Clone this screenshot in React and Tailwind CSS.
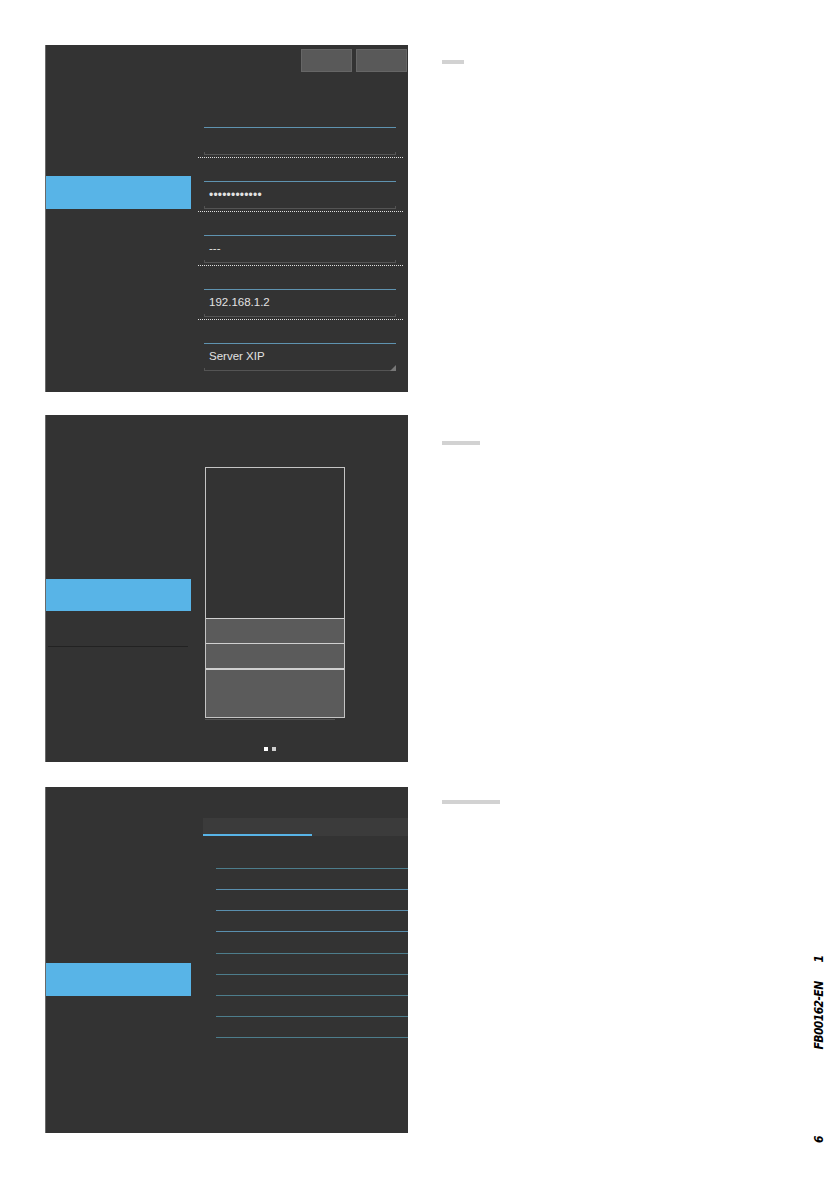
import React from "react";

const font = { fontFamily: '"Liberation Sans", Arial, sans-serif' };

function Field({ text, dotted = true, grip = false, small = false }) {
  return (
    <div className="flex flex-col">
      <div className="ml-[13px] w-[192px] h-px bg-[#5f93b0]" />
      <div className="ml-[18px] h-[24px] pt-[2px] flex items-center text-[11.5px] text-[#e2e2e2]">
        {small ? <span className="text-[12px] tracking-[0.2px]">{text}</span> : text}
      </div>
      <div className="relative ml-[13px] w-[192px] h-[3px] border-x border-b border-[#545454]">
        {grip && (
          <svg className="absolute right-[-1px] bottom-[-1px]" width="6" height="6" viewBox="0 0 6 6">
            <polygon points="6,0 6,6 0,6" fill="#777" />
          </svg>
        )}
      </div>
      {dotted ? (
        <div className="mt-[2px] ml-[7px] w-[205px] h-0 border-t border-dotted border-[#e0e0e0]" />
      ) : (
        <div className="mt-[2px] h-px" />
      )}
    </div>
  );
}

function Panel1() {
  return (
    <div className="w-[363px] h-[347px] bg-[#333333] border-l border-[#6a6a6a] flex">
      <div className="w-[145px] pt-[131px]">
        <div className="h-[33px] bg-[#58b4e7]" />
      </div>
      <div className="flex-1 flex flex-col">
        <div className="flex justify-end gap-[4px] pr-[1px] pt-[4px]">
          <div className="w-[51px] h-[23px] bg-[#595959] border border-[#666]" />
          <div className="w-[51px] h-[23px] bg-[#595959] border border-[#666]" />
        </div>
        <div className="mt-[55px] flex flex-col gap-[23px]">
          <Field text="" />
          <Field text="••••••••••••" small />
          <Field text="---" />
          <Field text="192.168.1.2" />
          <Field text="Server XIP" dotted={false} grip />
        </div>
      </div>
    </div>
  );
}

function Panel2() {
  return (
    <div className="w-[363px] h-[347px] bg-[#333333] border-l border-[#6a6a6a] flex">
      <div className="w-[145px] pt-[164px] flex flex-col">
        <div className="h-[32px] bg-[#58b4e7]" />
        <div className="mt-[35px] ml-[2px] w-[140px] h-px bg-[#222]" />
      </div>
      <div className="flex-1 flex flex-col">
        <div className="mt-[52px] ml-[14px] w-[140px] h-[251px] border border-[#c4c4c4] flex flex-col">
          <div className="h-[150px]" />
          <div className="h-[25px] bg-[#5b5b5b] border-t border-[#d0d0d0]" />
          <div className="h-[25px] bg-[#5b5b5b] border-t border-[#d0d0d0]" />
          <div className="flex-1 bg-[#5b5b5b] border-t-2 border-[#d0d0d0]" />
        </div>
        <div className="mt-[1px] ml-[14px] w-[130px] h-px bg-[#555]" />
        <div className="mt-[27px] ml-[73px] flex gap-[4px]">
          <div className="w-[4px] h-[4px] bg-white" />
          <div className="w-[4px] h-[4px] bg-[#cfcfcf]" />
        </div>
      </div>
    </div>
  );
}

function Panel3() {
  const lines = [
    ["#4d7d8c", "mt-0"],
    ["#5a8fae", "mt-[20px]"],
    ["#5a8fae", "mt-[20px]"],
    ["#5a8fae", "mt-[20px]"],
    ["#4d7d8c", "mt-[21px]"],
    ["#4d7d8c", "mt-[20px]"],
    ["#4d7d8c", "mt-[20px]"],
    ["#4d7d8c", "mt-[20px]"],
    ["#4d7d8c", "mt-[20px]"],
  ];
  return (
    <div className="w-[363px] h-[346px] bg-[#333333] border-l border-[#6a6a6a] flex">
      <div className="w-[145px] pt-[176px]">
        <div className="h-[33px] bg-[#58b4e7]" />
      </div>
      <div className="flex-1 flex flex-col">
        <div className="mt-[31px] ml-[12px] h-[18px] bg-[#3b3b3b] flex items-end">
          <div className="w-[109px] h-[2px] bg-[#58b4e7]" />
        </div>
        <div className="mt-[32px] ml-[25px] flex flex-col">
          {lines.map(([c, m], i) => (
            <div key={i} className={`h-px ${m}`} style={{ backgroundColor: c }} />
          ))}
        </div>
      </div>
    </div>
  );
}

export default function App() {
  return (
    <div className="relative w-[839px] h-[1191px] bg-white overflow-hidden" style={font}>
      <div className="pt-[45px] pl-[45px] flex flex-col">
        <div className="flex">
          <Panel1 />
          <div className="ml-[34px] mt-[15px] w-[22px] h-[4px] bg-[#d2d2d2]" />
        </div>
        <div className="flex mt-[23px]">
          <Panel2 />
          <div className="ml-[34px] mt-[26px] w-[38px] h-[4px] bg-[#d2d2d2]" />
        </div>
        <div className="flex mt-[25px]">
          <Panel3 />
          <div className="ml-[34px] mt-[13px] w-[58px] h-[4px] bg-[#d2d2d2]" />
        </div>
      </div>
      <div
        className="absolute left-[725px] top-[1042px] w-[188px] h-[14px] -rotate-90 flex items-center text-[12px] font-bold italic text-black leading-none"
        style={{ fontFamily: '"DejaVu Sans", sans-serif', fontStretch: "condensed" }}
      >
        <span>6</span>
        <span className="ml-[86px] tracking-[-0.6px]">FB00162-EN</span>
        <span className="flex-1" />
        <span>1</span>
      </div>
    </div>
  );
}
